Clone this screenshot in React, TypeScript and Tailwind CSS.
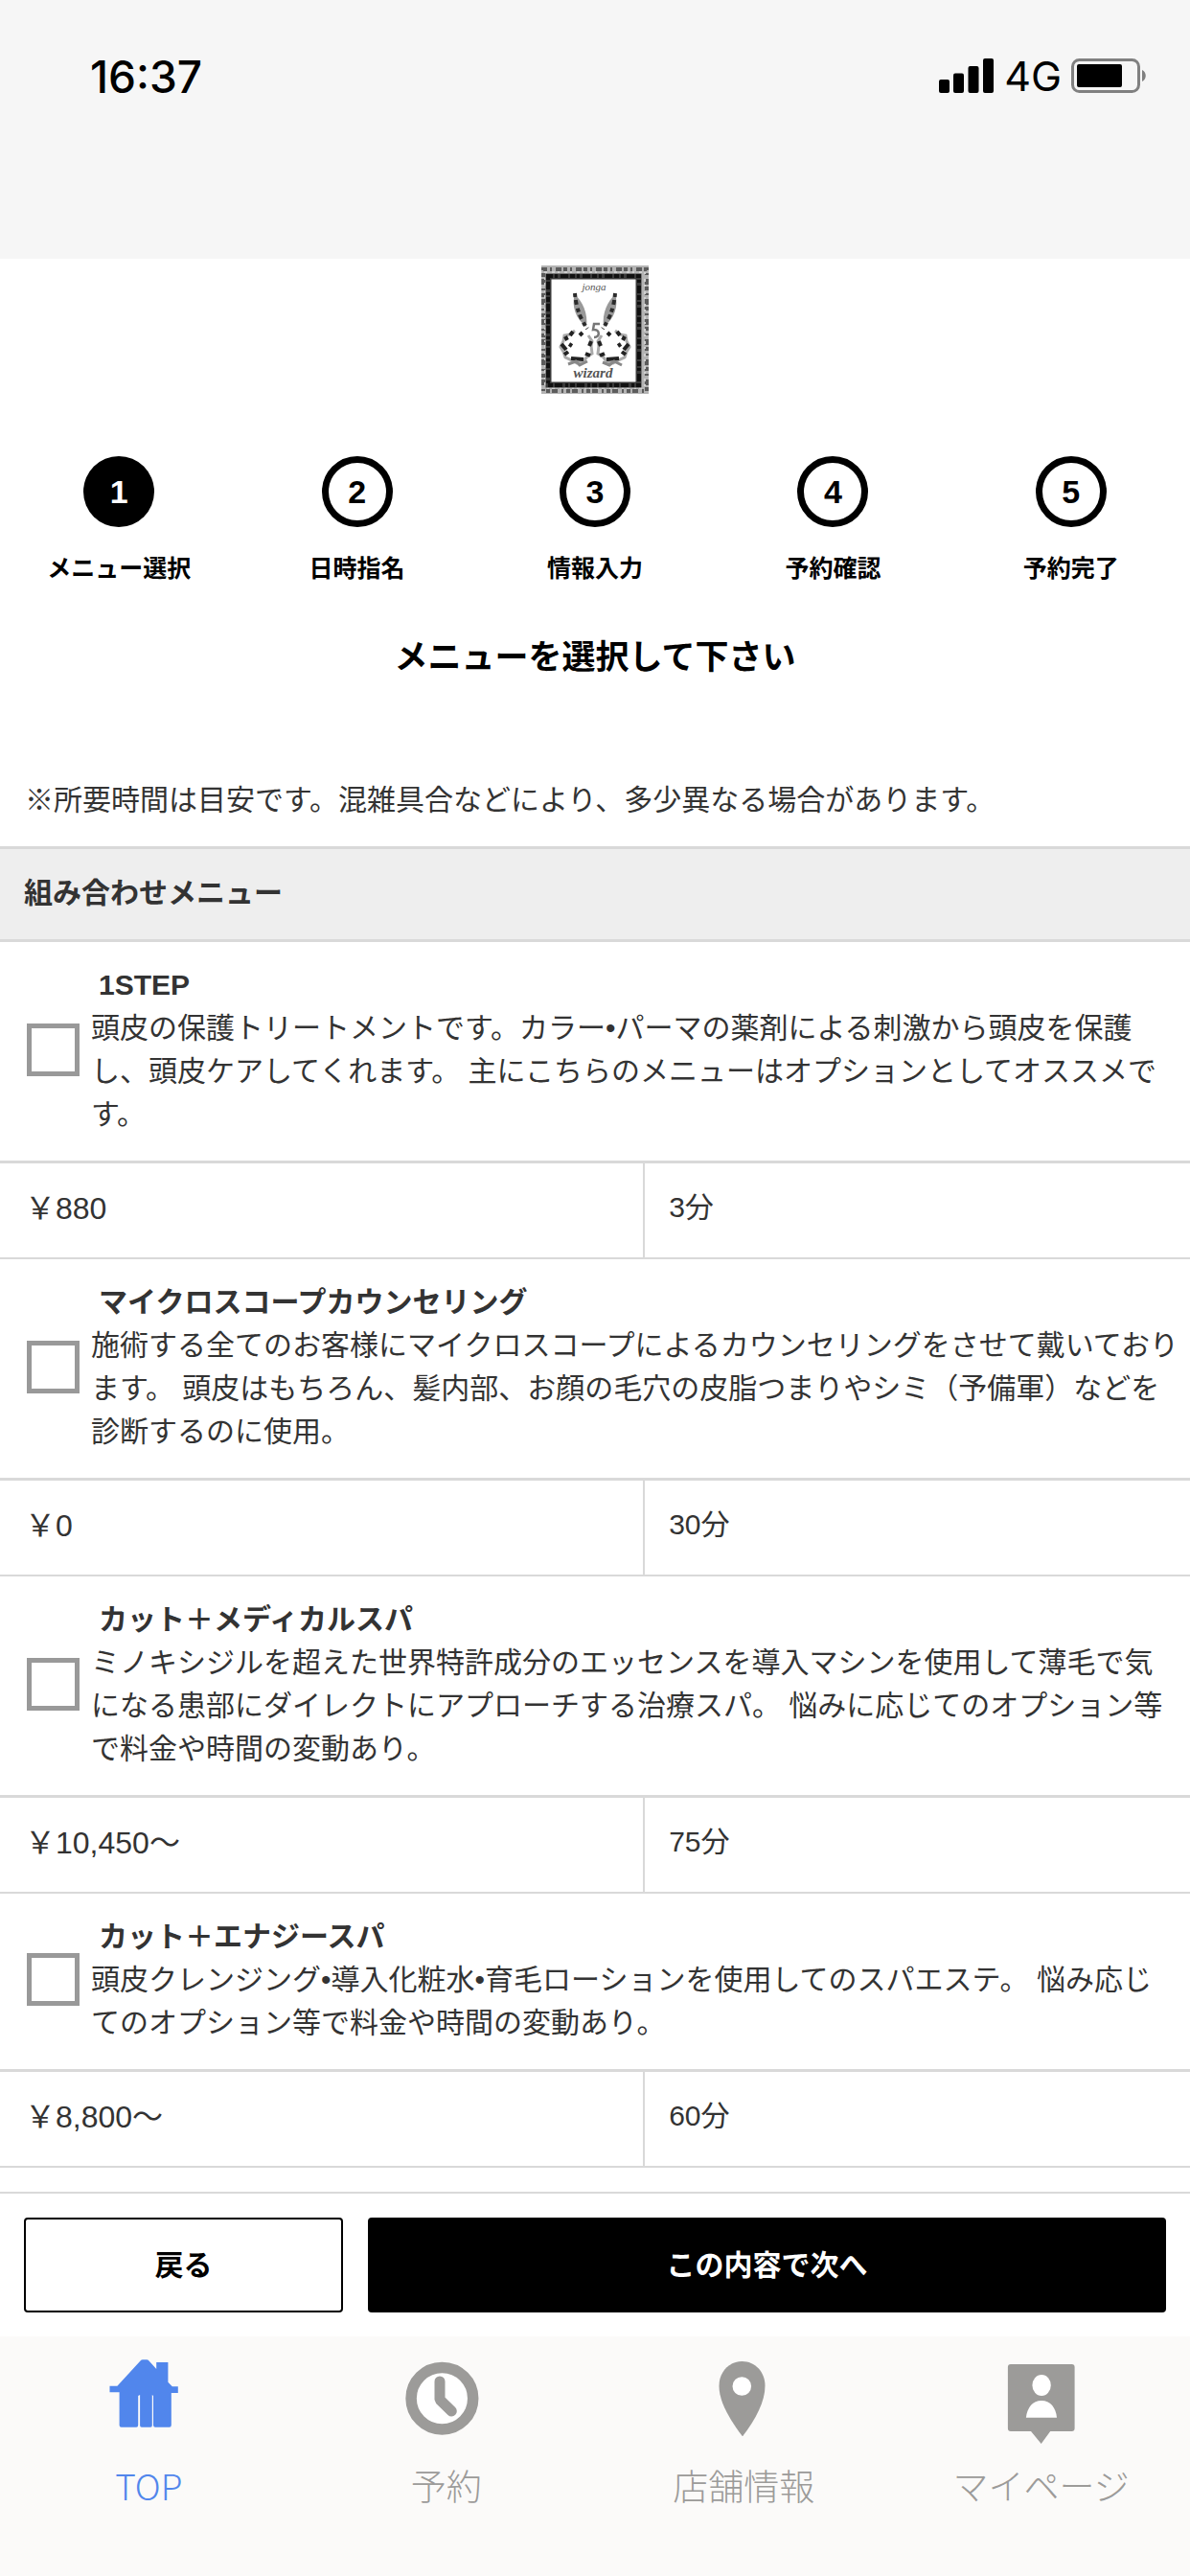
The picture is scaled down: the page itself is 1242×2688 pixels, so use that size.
import React, { useState } from 'react';

const STEPS = ['メニュー選択', '日時指名', '情報入力', '予約確認', '予約完了'];

const MENUS = [
  {
    id: 'step1',
    name: '1STEP',
    description:
      '頭皮の保護トリートメントです。カラー•パーマの薬剤による刺激から頭皮を保護\nし、頭皮ケアしてくれます。 主にこちらのメニューはオプションとしてオススメで\nす。',
    price: '￥880',
    time: '3分',
  },
  {
    id: 'microscope',
    name: 'マイクロスコープカウンセリング',
    description:
      '施術する全てのお客様にマイクロスコープによるカウンセリングをさせて戴いており\nます。 頭皮はもちろん、髪内部、お顔の毛穴の皮脂つまりやシミ（予備軍）などを\n診断するのに使用。',
    price: '￥0',
    time: '30分',
  },
  {
    id: 'medical',
    name: 'カット＋メディカルスパ',
    description:
      'ミノキシジルを超えた世界特許成分のエッセンスを導入マシンを使用して薄毛で気\nになる患部にダイレクトにアプローチする治療スパ。 悩みに応じてのオプション等\nで料金や時間の変動あり。',
    price: '￥10,450〜',
    time: '75分',
  },
  {
    id: 'energy',
    name: 'カット＋エナジースパ',
    description:
      '頭皮クレンジング•導入化粧水•育毛ローションを使用してのスパエステ。 悩み応じ\nてのオプション等で料金や時間の変動あり。',
    price: '￥8,800〜',
    time: '60分',
  },
];

function StatusBar() {
  return (
    <header className="flex h-[270px] items-start justify-between bg-[#f6f6f6] pt-[50px] pr-[43px] pl-[94px] font-['Inter',sans-serif] text-black">
      <span className="text-[46px] leading-[60px] font-medium">16:37</span>
      <div className="flex h-[58px] items-center gap-[10px]">
        <svg width="58" height="36" viewBox="0 0 58 36" aria-hidden="true">
          <rect x="0" y="22" width="11" height="14" rx="2" />
          <rect x="15" y="15.500" width="11" height="20.500" rx="2" />
          <rect x="30.500" y="8" width="11" height="28" rx="2" />
          <rect x="46" y="0" width="11" height="36" rx="2" />
        </svg>
        <span className="text-[43px] leading-[58px]">4G</span>
        <svg width="81" height="36" viewBox="0 0 81 36" aria-hidden="true">
          <rect x="1.500" y="1.500" width="69" height="33" rx="7" fill="none" stroke="#808080" strokeWidth="3" />
          <rect x="6" y="6" width="47" height="24" rx="2" />
          <path d="M74 12c5 2 5 10 0 12z" fill="#808080" />
        </svg>
      </div>
    </header>
  );
}

function ShopLogo() {
  return (
    <svg width="112" height="134" viewBox="0 0 112 134" role="img" aria-label="logo">
      <rect width="112" height="134" fill="#b4b4b4" />
      <rect x="2" y="4" width="108" height="127" fill="none" stroke="#5c5c5c" strokeWidth="4" strokeDasharray="4 3 2 4 6 2" />
      <rect x="4" y="7" width="104" height="121" fill="none" stroke="#d0d0d0" strokeWidth="2" strokeDasharray="2 5 3 3" />
      <rect x="7.500" y="11.500" width="94" height="113" fill="#fff" stroke="#3a3a3a" strokeWidth="6" />
      <rect x="7" y="11" width="95" height="114" fill="none" stroke="#111" strokeWidth="4" strokeDasharray="5 2 3 3 8 2" />
      <text x="55" y="26" textAnchor="middle" fontFamily="Liberation Serif, serif" fontStyle="italic" fontSize="11" fill="#555">
        jonga
      </text>
      <text x="54" y="117" textAnchor="middle" fontFamily="Liberation Serif, serif" fontStyle="italic" fontWeight="bold" fontSize="15" fill="#555">
        wizard
      </text>
      {/* wings */}
      <path d="M35 30C31 42 36 56 47 64C49 50 43 38 35 30z" fill="#999" />
      <path d="M77 30C81 42 76 56 65 64C63 50 69 38 77 30z" fill="#999" />
      <g fill="none" stroke="#2b2b2b" strokeWidth="4" strokeDasharray="4 3 5 4">
        <path d="M35 29C36 42 40 55 48 66" />
        <path d="M77 29C76 42 72 55 64 66" />
      </g>
      {/* wreaths */}
      <g fill="none" stroke="#aaa" strokeWidth="3">
        <path d="M35 68l-5 4-6 1-1 6-3 6 3 5 2 6 7 3 5 3 7-2 4-5 5-3-1-8 1-5-4-6" />
        <path d="M77 68l5 4 6 1 1 6 3 6-3 5-2 6-7 3-5 3-7-2-4-5-5-3 1-8-1-5 4-6" />
      </g>
      <g fill="none" stroke="#222" strokeWidth="4">
        <path d="M33 69l-3 4M25 74l2 4M21 82l5 6M24 93l4-3M31 97l13 1M46 92l5 2M50 84l2-5M40 73l3-3M29 82l3 2" />
        <path d="M79 69l3 4M87 74l-2 4M91 82l-5 6M88 93l-4-3M81 97l-13 1M66 92l-5 2M62 84l-2-5M72 73l-3-3M83 82l-3 2" />
      </g>
      <path d="M28 103l8-3 4 4 8-4M64 101l7 3 5-4 8 4" fill="none" stroke="#888" strokeWidth="3" />
      <path d="M61 61h-6l-1 6c7-1 8 8 1 8" fill="none" stroke="#777" strokeWidth="2.500" />
    </svg>
  );
}

function HomeIcon() {
  return (
    <svg width="90" height="90" viewBox="0 0 90 90" aria-hidden="true">
      <path
        fill="#5186ec"
        d="M39 2.300h4q1.500 0 2.500 1.200L53.200 12V5h12.200v20.700l4.400 4.600h6V37h-7v33.500q0 2.200-2 2.200H52q-1.800 0-2-2V40l-1.200-1v32q0 1.700-1.600 1.700h-9.400q-1.700 0-1.700-1.700V39l-1.900 1v30.500q0 2.200-2 2.200H16.600q-2 0-2-2V36.300H4.500v-6.600h7.900L36.500 3.500Q37.500 2.300 39 2.300z"
      />
    </svg>
  );
}

function ClockIcon() {
  return (
    <svg width="90" height="90" viewBox="0 0 90 90" aria-hidden="true">
      <circle cx="40.400" cy="42.700" r="32.300" fill="#fff" stroke="#9c9b99" strokeWidth="11.500" />
      <path d="M38 25v19l12.300 12" fill="none" stroke="#9c9b99" strokeWidth="11" strokeLinecap="round" strokeLinejoin="bevel" />
    </svg>
  );
}

function PinIcon() {
  return (
    <svg width="90" height="90" viewBox="0 0 90 90" aria-hidden="true">
      <path fill="#9c9b99" d="M43.500 4C57 4 67.500 15 67.500 29.500C67.500 46 58 64 44 82.300C30 64 19.500 46 19.500 29.500C19.500 15 30 4 43.500 4z" />
      <circle cx="43.300" cy="30" r="9.800" fill="#fff" />
    </svg>
  );
}

function UserIcon() {
  return (
    <svg width="90" height="90" viewBox="0 0 90 90" aria-hidden="true">
      <path fill="#9c9b99" d="M12.900 7h63.700q3 0 3 3v64q0 3-3 3H54.200L44.700 90 34 77H12.900q-3 0-3-3V10q0-3 3-3z" />
      <ellipse cx="45.100" cy="29" rx="9.700" ry="11" fill="#fff" />
      <path fill="#fff" d="M28.900 62.700C30 52 36 45 45 45s15 7 16 17.700z" />
    </svg>
  );
}

const TABS = [
  { label: 'TOP', icon: <HomeIcon />, active: true },
  { label: '予約', icon: <ClockIcon />, active: false },
  { label: '店舗情報', icon: <PinIcon />, active: false },
  { label: 'マイページ', icon: <UserIcon />, active: false },
];

export default function App() {
  const [selected, setSelected] = useState<string[]>([]);

  const toggle = (id: string) => {
    setSelected((prev) => (prev.includes(id) ? prev.filter((v) => v !== id) : [...prev, id]));
  };

  return (
    <div className="min-h-screen bg-white font-['Liberation_Sans','Noto_Sans_CJK_JP',sans-serif] text-[30px] leading-[45px] text-[#333]">
      <StatusBar />

      <main>
        <div className="flex justify-center pt-[7px]">
          <ShopLogo />
        </div>

        {/* steps */}
        <ol className="mt-[65px] grid grid-cols-5 text-black">
          {STEPS.map((step, i) => (
            <li key={step} className="flex flex-col items-center">
              <span
                className={
                  i === 0
                    ? 'flex size-[74px] items-center justify-center rounded-full bg-black text-[34px] font-bold text-white'
                    : 'flex size-[74px] items-center justify-center rounded-full border-[7px] border-black text-[34px] font-bold'
                }
              >
                {i + 1}
              </span>
              <span className="mt-[25px] text-[25px] leading-[36px] font-bold">{step}</span>
            </li>
          ))}
        </ol>

        <h1 className="mt-[50px] text-center text-[35px] leading-[50px] font-bold text-black">
          メニューを選択して下さい
        </h1>

        <p className="mt-[101px] px-[26px]">
          ※所要時間は目安です。混雑具合などにより、多少異なる場合があります。
        </p>

        {/* menu list */}
        <table className="mt-[26px] w-full table-fixed border-separate border-spacing-0">
          <colgroup>
            <col className="w-[54.2%]" />
            <col />
          </colgroup>
          <thead>
            <tr>
              <th colSpan={2} className="h-[100px] border-y-[3px] border-[#d9d9d9] bg-[#eee] px-[25px] pb-1 text-left font-bold">
                組み合わせメニュー
              </th>
            </tr>
          </thead>
          {MENUS.map((menu) => (
            <tbody key={menu.id}>
              <tr>
                <td colSpan={2} className="border-b-[3px] border-[#d9d9d9] pt-[22px] pb-[26px] pl-[28px]">
                  <div className="flex items-center gap-[12px]">
                    <input
                      id={menu.id}
                      type="checkbox"
                      checked={selected.includes(menu.id)}
                      onChange={() => toggle(menu.id)}
                      className="size-[55px] shrink-0 appearance-none border-[5px] border-[#999] bg-white checked:bg-[#999]"
                    />
                    <label htmlFor={menu.id} className="block flex-1">
                      <span className="block pl-[8px] font-bold">{menu.name}</span>
                      <span className="block whitespace-pre-line">{menu.description}</span>
                    </label>
                  </div>
                </td>
              </tr>
              <tr>
                <td className="h-[100px] border-r-2 border-b-2 border-[#d9d9d9] pb-1 pl-[26px] text-[32px]">{menu.price}</td>
                <td className="h-[100px] border-b-2 border-[#d9d9d9] pb-2 pl-[25px]">{menu.time}</td>
              </tr>
            </tbody>
          ))}
        </table>
      </main>

      <div className="mt-[25px] grid grid-cols-[2fr_5fr] gap-[26px] border-t-2 border-[#d9d9d9] px-[25px] py-[25px] font-bold">
        <button type="button" className="h-[99px] rounded-[4px] border-2 border-black bg-white text-black">
          戻る
        </button>
        <button type="button" className="h-[99px] rounded-[4px] bg-black text-white">
          この内容で次へ
        </button>
      </div>

      <nav className="grid grid-cols-4 bg-[#fbfaf9] pt-[22px] pb-[67px] font-['Noto_Sans_CJK_JP',sans-serif] text-[37px] leading-[56px] font-light">
        {TABS.map((tab) => (
          <a
            key={tab.label}
            href="#"
            className={
              tab.active
                ? 'flex flex-col items-center gap-[15px] text-[#5186ec]'
                : 'flex flex-col items-center gap-[15px] text-[#9c9b99]'
            }
          >
            {tab.icon}
            <span>{tab.label}</span>
          </a>
        ))}
      </nav>
    </div>
  );
}
